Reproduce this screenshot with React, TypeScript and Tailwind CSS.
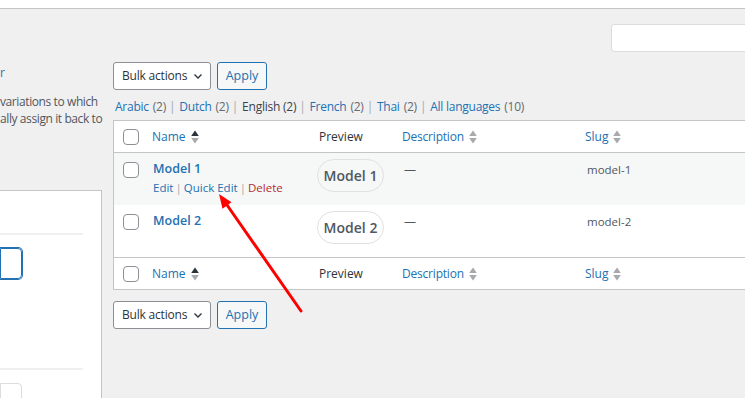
import React from "react";

const font = { fontFamily: '"Open Sans", "Noto Sans", sans-serif' };

function Checkbox() {
  return <div className="w-[16px] h-[16px] rounded-[4px] border border-[#8c8f94] bg-white shrink-0" />;
}

function SortIcon({ active }: { active?: boolean }) {
  return (
    <svg width="8" height="14" viewBox="0 0 8 14" className="ml-[5px] shrink-0">
      <path d="M4 0.5 L7.8 6 L0.2 6 Z" fill={active ? "#2c3338" : "#a7aaad"} />
      <path d="M4 13.5 L7.8 8 L0.2 8 Z" fill="#a7aaad" />
    </svg>
  );
}

function TableNav() {
  return (
    <div className="flex items-center h-[28px]">
      <div className="flex items-center h-[28px] w-[98px] border border-[#8c8f94] rounded-[3px] bg-white pl-[8px] text-[12px] tracking-[-0.2px] text-[#2c3338]">
        <span>Bulk actions</span>
        <svg width="10" height="10" viewBox="0 0 10 10" className="ml-[6px]">
          <path d="M1.5 3.5 L5 7 L8.5 3.5" fill="none" stroke="#2c3338" strokeWidth="1.3" />
        </svg>
      </div>
      <div className="ml-[6px] flex items-center justify-center h-[28px] w-[50px] border border-[#2271b1] rounded-[3px] bg-[#f6f7f7] text-[12.5px] text-[#2271b1]">
        Apply
      </div>
    </div>
  );
}

function HeaderRow({ top }: { top?: boolean }) {
  return (
    <div className={`flex items-center h-[32px] bg-white ${top ? "border-b" : "border-t"} border-[#c3c4c7] text-[12px]`}>
      <div className="w-[32px] pl-[9px] shrink-0"><Checkbox /></div>
      <div className="w-[166px] pl-[6px] shrink-0 flex items-center text-[#2271b1]">
        <span>Name</span>
        <SortIcon active />
      </div>
      <div className="w-[83px] pl-[7px] shrink-0 text-[#2c3338]">Preview</div>
      <div className="w-[183px] pl-[7px] shrink-0 flex items-center text-[#2271b1] tracking-[-0.2px]">
        <span>Description</span>
        <SortIcon />
      </div>
      <div className="pl-[7px] flex items-center text-[#2271b1]">
        <span>Slug</span>
        <SortIcon />
      </div>
    </div>
  );
}

function BodyRow({ n, alt, actions }: { n: number; alt?: boolean; actions?: boolean }) {
  return (
    <div className={`flex items-start h-[52px] ${alt ? "bg-[#f6f7f7]" : "bg-white"}`}>
      <div className="w-[32px] pl-[9px] pt-[9px] shrink-0"><Checkbox /></div>
      <div className="w-[166px] pl-[7px] pt-[7px] shrink-0">
        <div className="text-[12.5px] font-semibold text-[#2271b1] leading-[17px]">Model {n}</div>
        {actions && (
          <div className="mt-[2px] text-[11.5px] leading-[17px] flex items-center">
            <span className="text-[#2271b1]">Edit</span>
            <span className="text-[#a7aaad] mx-[2px]">|</span>
            <span className="text-[#2271b1]">Quick Edit</span>
            <span className="text-[#a7aaad] mx-[2px]">|</span>
            <span className="text-[#b32d2e]">Delete</span>
          </div>
        )}
      </div>
      <div className="w-[83px] pl-[5px] pt-[6px] shrink-0">
        <div className={`h-[33px] w-[67px] rounded-full border border-[#e0e0e0] ${alt ? "bg-[#f6f7f7]" : "bg-white"} flex items-center justify-center text-[14px] font-semibold text-[#50575e]`}>
          Model {n}
        </div>
      </div>
      <div className="w-[183px] pl-[9px] pt-[8px] shrink-0 text-[12px] text-[#50575e] leading-[17px]">—</div>
      <div className="pl-[9px] pt-[8px] text-[11.5px] text-[#50575e] leading-[17px]">model-{n}</div>
    </div>
  );
}

function Lang({ name, count, current, last }: { name: string; count: number; current?: boolean; last?: boolean }) {
  return (
    <>
      <span className={current ? "text-[#3c434a] font-medium" : "text-[#2271b1]"}>{name}</span>
      <span className={`${current ? "text-[#3c434a] font-medium ml-[3px]" : "text-[#646970] ml-[4px]"}`}>({count})</span>
      {!last && <span className="text-[#a7aaad] ml-[3px] mr-[4px]">|</span>}
    </>
  );
}

export default function App() {
  return (
    <div className="relative w-[745px] h-[398px] overflow-hidden bg-[#f0f0f1] flex flex-col" style={font}>
      <div className="h-[9px] bg-white border-b border-[#c3c4c7] shrink-0" />
      <div className="flex flex-1">
        <div className="w-[102px] shrink-0 flex flex-col">
          <div className="mt-[55px] h-[17px] text-[12px] leading-[17px] text-[#3c6e99]">r</div>
          <div className="mt-[12px] text-[12px] leading-[17px] tracking-[-0.4px] text-[#50575e] whitespace-nowrap">
            <div>variations to which</div>
            <div>ally assign it back to</div>
          </div>
          <div className="mt-[63px] flex-1 bg-white border-t border-r border-[#c3c4c7] pr-[18px]">
            <div className="h-[44px] border-b-2 border-[#f0f0f1]" />
            <div className="mt-[13px] h-[31px] w-[22px] border border-[#2271b1] rounded-r-[4px] shadow-[0_0_0_1px_#2271b1]" />
            <div className="mt-[89px] border-b-2 border-[#f0f0f1]" />
            <div className="mt-[13px] h-[31px] w-[22px] border border-[#dcdcde] rounded-r-[4px]" />
          </div>
        </div>
        <div className="ml-[11px] flex-1 flex flex-col overflow-hidden">
          <div className="mt-[15px] pl-[498px]">
            <div className="h-[28px] w-[160px] bg-white border border-[#dcdcde] rounded-[3px]" />
          </div>
          <div className="mt-[10px]"><TableNav /></div>
          <div className="mt-[8px] h-[17px] text-[12px] leading-[17px] tracking-[-0.25px] whitespace-nowrap pl-[2px] flex items-center">
            <Lang name="Arabic" count={2} />
            <Lang name="Dutch" count={2} />
            <Lang name="English" count={2} current />
            <Lang name="French" count={2} />
            <Lang name="Thai" count={2} />
            <Lang name="All languages" count={10} last />
          </div>
          <div className="mt-[5px] w-[700px] border border-[#c3c4c7] bg-white">
            <HeaderRow top />
            <BodyRow n={1} alt actions />
            <BodyRow n={2} />
            <HeaderRow />
          </div>
          <div className="mt-[11px]"><TableNav /></div>
        </div>
      </div>
      <svg className="absolute left-0 top-0 pointer-events-none" width="745" height="398">
        <line x1="301" y1="311" x2="227" y2="205" stroke="#ff0000" strokeWidth="3" strokeLinecap="round" />
        <polygon points="219,194 231.5,202.3 222.5,208.7" fill="#ff0000" />
      </svg>
    </div>
  );
}
